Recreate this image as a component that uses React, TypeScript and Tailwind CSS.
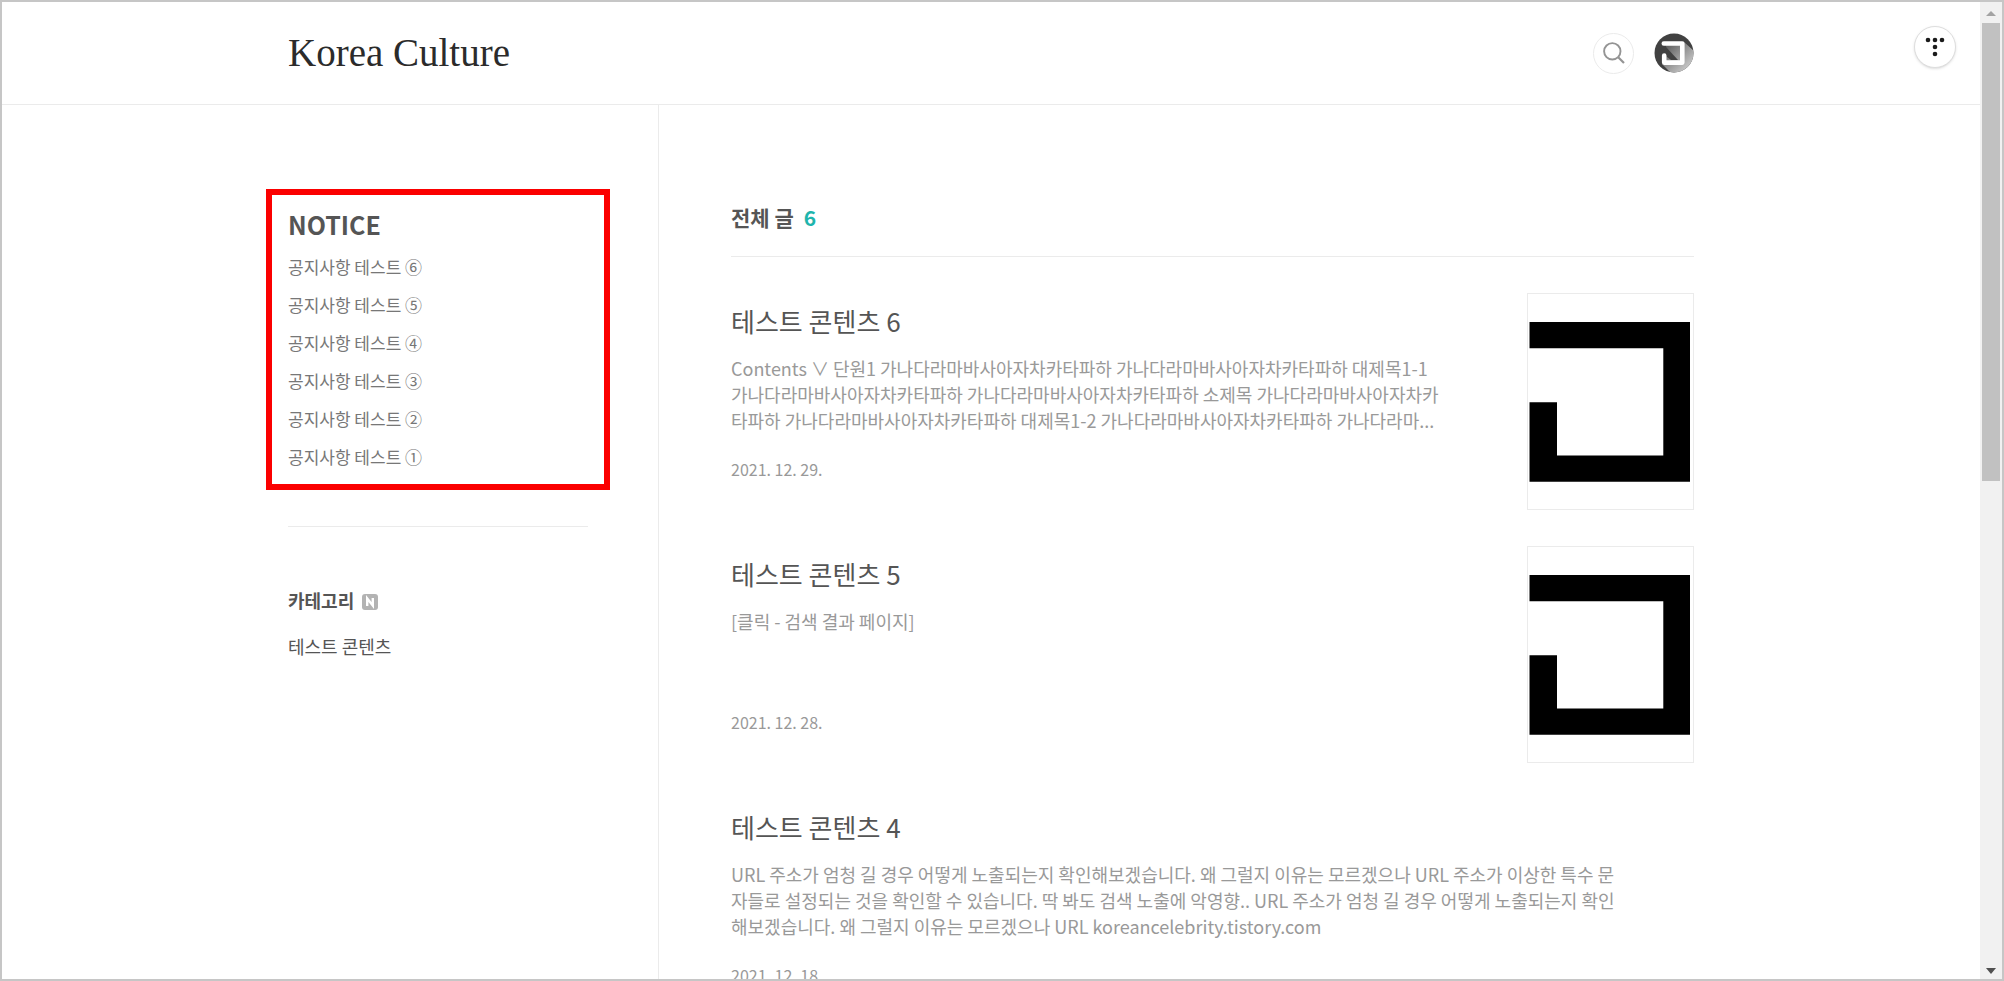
import React from "react";

const NOTICES = [
  "공지사항 테스트 ⑥",
  "공지사항 테스트 ⑤",
  "공지사항 테스트 ④",
  "공지사항 테스트 ③",
  "공지사항 테스트 ②",
  "공지사항 테스트 ①",
];

const POSTS = [
  {
    title: "테스트 콘텐츠 6",
    summary: [
      "Contents ∨ 단원1 가나다라마바사아자차카타파하 가나다라마바사아자차카타파하 대제목1-1",
      "가나다라마바사아자차카타파하 가나다라마바사아자차카타파하 소제목 가나다라마바사아자차카",
      "타파하 가나다라마바사아자차카타파하 대제목1-2 가나다라마바사아자차카타파하 가나다라마...",
    ],
    date: "2021. 12. 29.",
    thumbnail: true,
  },
  {
    title: "테스트 콘텐츠 5",
    summary: ["[클릭 - 검색 결과 페이지]"],
    date: "2021. 12. 28.",
    thumbnail: true,
  },
  {
    title: "테스트 콘텐츠 4",
    summary: [
      "URL 주소가 엄청 길 경우 어떻게 노출되는지 확인해보겠습니다. 왜 그럴지 이유는 모르겠으나 URL 주소가 이상한 특수 문",
      "자들로 설정되는 것을 확인할 수 있습니다. 딱 봐도 검색 노출에 악영향.. URL 주소가 엄청 길 경우 어떻게 노출되는지 확인",
      "해보겠습니다. 왜 그럴지 이유는 모르겠으나 URL koreancelebrity.tistory.com",
    ],
    date: "2021. 12. 18.",
    thumbnail: false,
  },
];

// Icons
const SearchIcon = () => (
  <svg width="22" height="22" viewBox="0 0 22 22" fill="none" stroke="#949494">
    <circle cx="9.3" cy="9.3" r="8.2" strokeWidth="1.9" />
    <path d="M15 15L21 21" strokeWidth="2.2" />
  </svg>
);

const Avatar = () => (
  <svg width="40" height="40" viewBox="0 0 40 40">
    <defs>
      <clipPath id="avatar-clip">
        <circle cx="20" cy="20" r="19.5" />
      </clipPath>
      <linearGradient id="avatar-shade" x1="0" y1="0" x2="1" y2="1">
        <stop offset="0.2" stopColor="#6a6a6a" />
        <stop offset="0.9" stopColor="#d2d2d2" />
      </linearGradient>
      <linearGradient id="avatar-inner" x1="0" y1="0" x2="1" y2="1">
        <stop offset="0" stopColor="#5c5c5c" />
        <stop offset="1" stopColor="#a8a8a8" />
      </linearGradient>
    </defs>
    <g clipPath="url(#avatar-clip)">
      <rect width="40" height="40" fill="#414141" />
      <path d="M30 9L40 18V40H17L8 31L20 26Z" fill="url(#avatar-shade)" />
      <rect x="12" y="12" width="15" height="16" fill="url(#avatar-inner)" />
      <path d="M8 13L12 14L24 27H17L8 20Z" fill="#414141" />
      <path
        d="M9.8 10.5H28.3V29.6H10.2V22.5"
        fill="none"
        stroke="#fff"
        strokeWidth="4.6"
        strokeLinejoin="round"
        strokeLinecap="round"
      />
    </g>
  </svg>
);

const TistoryIcon = () => (
  <svg width="20" height="20" viewBox="0 0 20 20" fill="#1b1b1b">
    <circle cx="3" cy="3" r="2.3" />
    <circle cx="10" cy="3" r="2.3" />
    <circle cx="17" cy="3" r="2.3" />
    <circle cx="10" cy="10" r="2.3" />
    <circle cx="10" cy="17" r="2.3" />
  </svg>
);

const NewIcon = () => (
  <svg className="mt-1" width="16" height="16" viewBox="0 0 16 16">
    <rect width="16" height="16" rx="3" fill="#b3b3b3" />
    <path d="M5.2 12V4.4L10.8 11.6V4" fill="none" stroke="#fff" strokeWidth="2.4" />
  </svg>
);

const Thumbnail = () => (
  <svg width="165" height="215" viewBox="1 1 165 215">
    <path d="M2.5 29H163V188.7H2.5V109.3H30V162.6H136.3V55.3H2.5Z" />
  </svg>
);

const Header = () => (
  <header className="border-b border-[#ebebeb]">
    <div className="mx-auto flex h-[102px] max-w-[1406px] items-center justify-between">
      <h1 className="pb-0.5 font-['Liberation_Serif',serif] text-[39px] leading-none text-[#2b2b2b]">
        <a href="#">Korea Culture</a>
      </h1>
      <div className="flex items-center gap-5">
        <button
          aria-label="검색"
          className="flex size-[41px] items-center justify-center rounded-full border border-[#ebebeb]"
        >
          <SearchIcon />
        </button>
        <button aria-label="프로필" className="rounded-full">
          <Avatar />
        </button>
      </div>
    </div>
  </header>
);

const Sidebar = () => (
  <aside className="w-[370px] shrink-0 pt-[84px] pr-[70px]">
    <section className="-mx-[22px] border-[6px] border-[#fb0000] px-4 pt-[11px] pb-[14px]">
      <h2 className="text-[25px] leading-[36px] font-bold">NOTICE</h2>
      <ul className="mt-3 flex flex-col gap-3 text-[17px] leading-[26px] text-[#777]">
        {NOTICES.map((notice) => (
          <li key={notice}>
            <a href="#">{notice}</a>
          </li>
        ))}
      </ul>
    </section>

    <nav className="mt-9 border-t border-[#ebebeb] pt-[60px] text-lg leading-[26px]">
      <a href="#" className="flex items-center gap-2 font-bold">
        카테고리 <NewIcon />
      </a>
      <a href="#" className="mt-5 block">
        테스트 콘텐츠
      </a>
    </nav>
  </aside>
);

const Posts = () => (
  <main className="min-w-0 flex-1 border-l border-[#ebebeb] pt-[97px] pl-[72px]">
    <h2 className="flex gap-[10px] border-b border-[#ebebeb] pb-6 text-[21px] leading-[30px] font-bold">
      전체 글 <span className="text-[#1fb5ad]">6</span>
    </h2>

    {POSTS.map((post) => (
      <article key={post.title} className="mt-9 flex h-[217px] justify-between">
        <div className="min-w-0 flex-1 pr-10">
          <h3 className="pt-[10px] text-[26px] leading-[36px]">
            <a href="#">{post.title}</a>
          </h3>
          <p className="mt-4 min-h-[78px] text-lg leading-[26px] break-all whitespace-pre-line text-[#999]">
            {post.summary.join("\n")}
          </p>
          <p className="mt-6 text-base leading-6 text-[#999]">{post.date}</p>
        </div>
        {post.thumbnail && (
          <a href="#" aria-label={post.title} className="shrink-0 border border-[#ebebeb]">
            <Thumbnail />
          </a>
        )}
      </article>
    ))}
  </main>
);

const Scrollbar = () => (
  <div className="flex w-[22px] shrink-0 flex-col items-center bg-[#f1f1f1]">
    <svg width="10" height="21" viewBox="0 0 10 21" fill="#a3a3a3">
      <path d="M0 14L5 9L10 14Z" />
    </svg>
    <div className="min-h-0 w-full flex-1 px-[2px]">
      <div className="h-[49%] bg-[#c1c1c1]" />
    </div>
    <svg width="10" height="21" viewBox="0 0 10 21" fill="#505050">
      <path d="M0 10H10L5 16Z" />
    </svg>
  </div>
);

export default function App() {
  return (
    <div className="flex h-screen overflow-hidden border-2 border-[#c6c6c6] bg-white font-['Noto_Sans_CJK_KR',sans-serif] text-[#555]">
      <div className="relative flex min-w-0 flex-1 flex-col overflow-hidden">
        <Header />
        <div className="mx-auto flex w-full max-w-[1406px] flex-1">
          <Sidebar />
          <Posts />
        </div>
        <button
          aria-label="티스토리"
          className="absolute top-6 right-6 flex size-[42px] items-center justify-center rounded-full border border-[#dedede] bg-white shadow"
        >
          <TistoryIcon />
        </button>
      </div>
      <Scrollbar />
    </div>
  );
}
